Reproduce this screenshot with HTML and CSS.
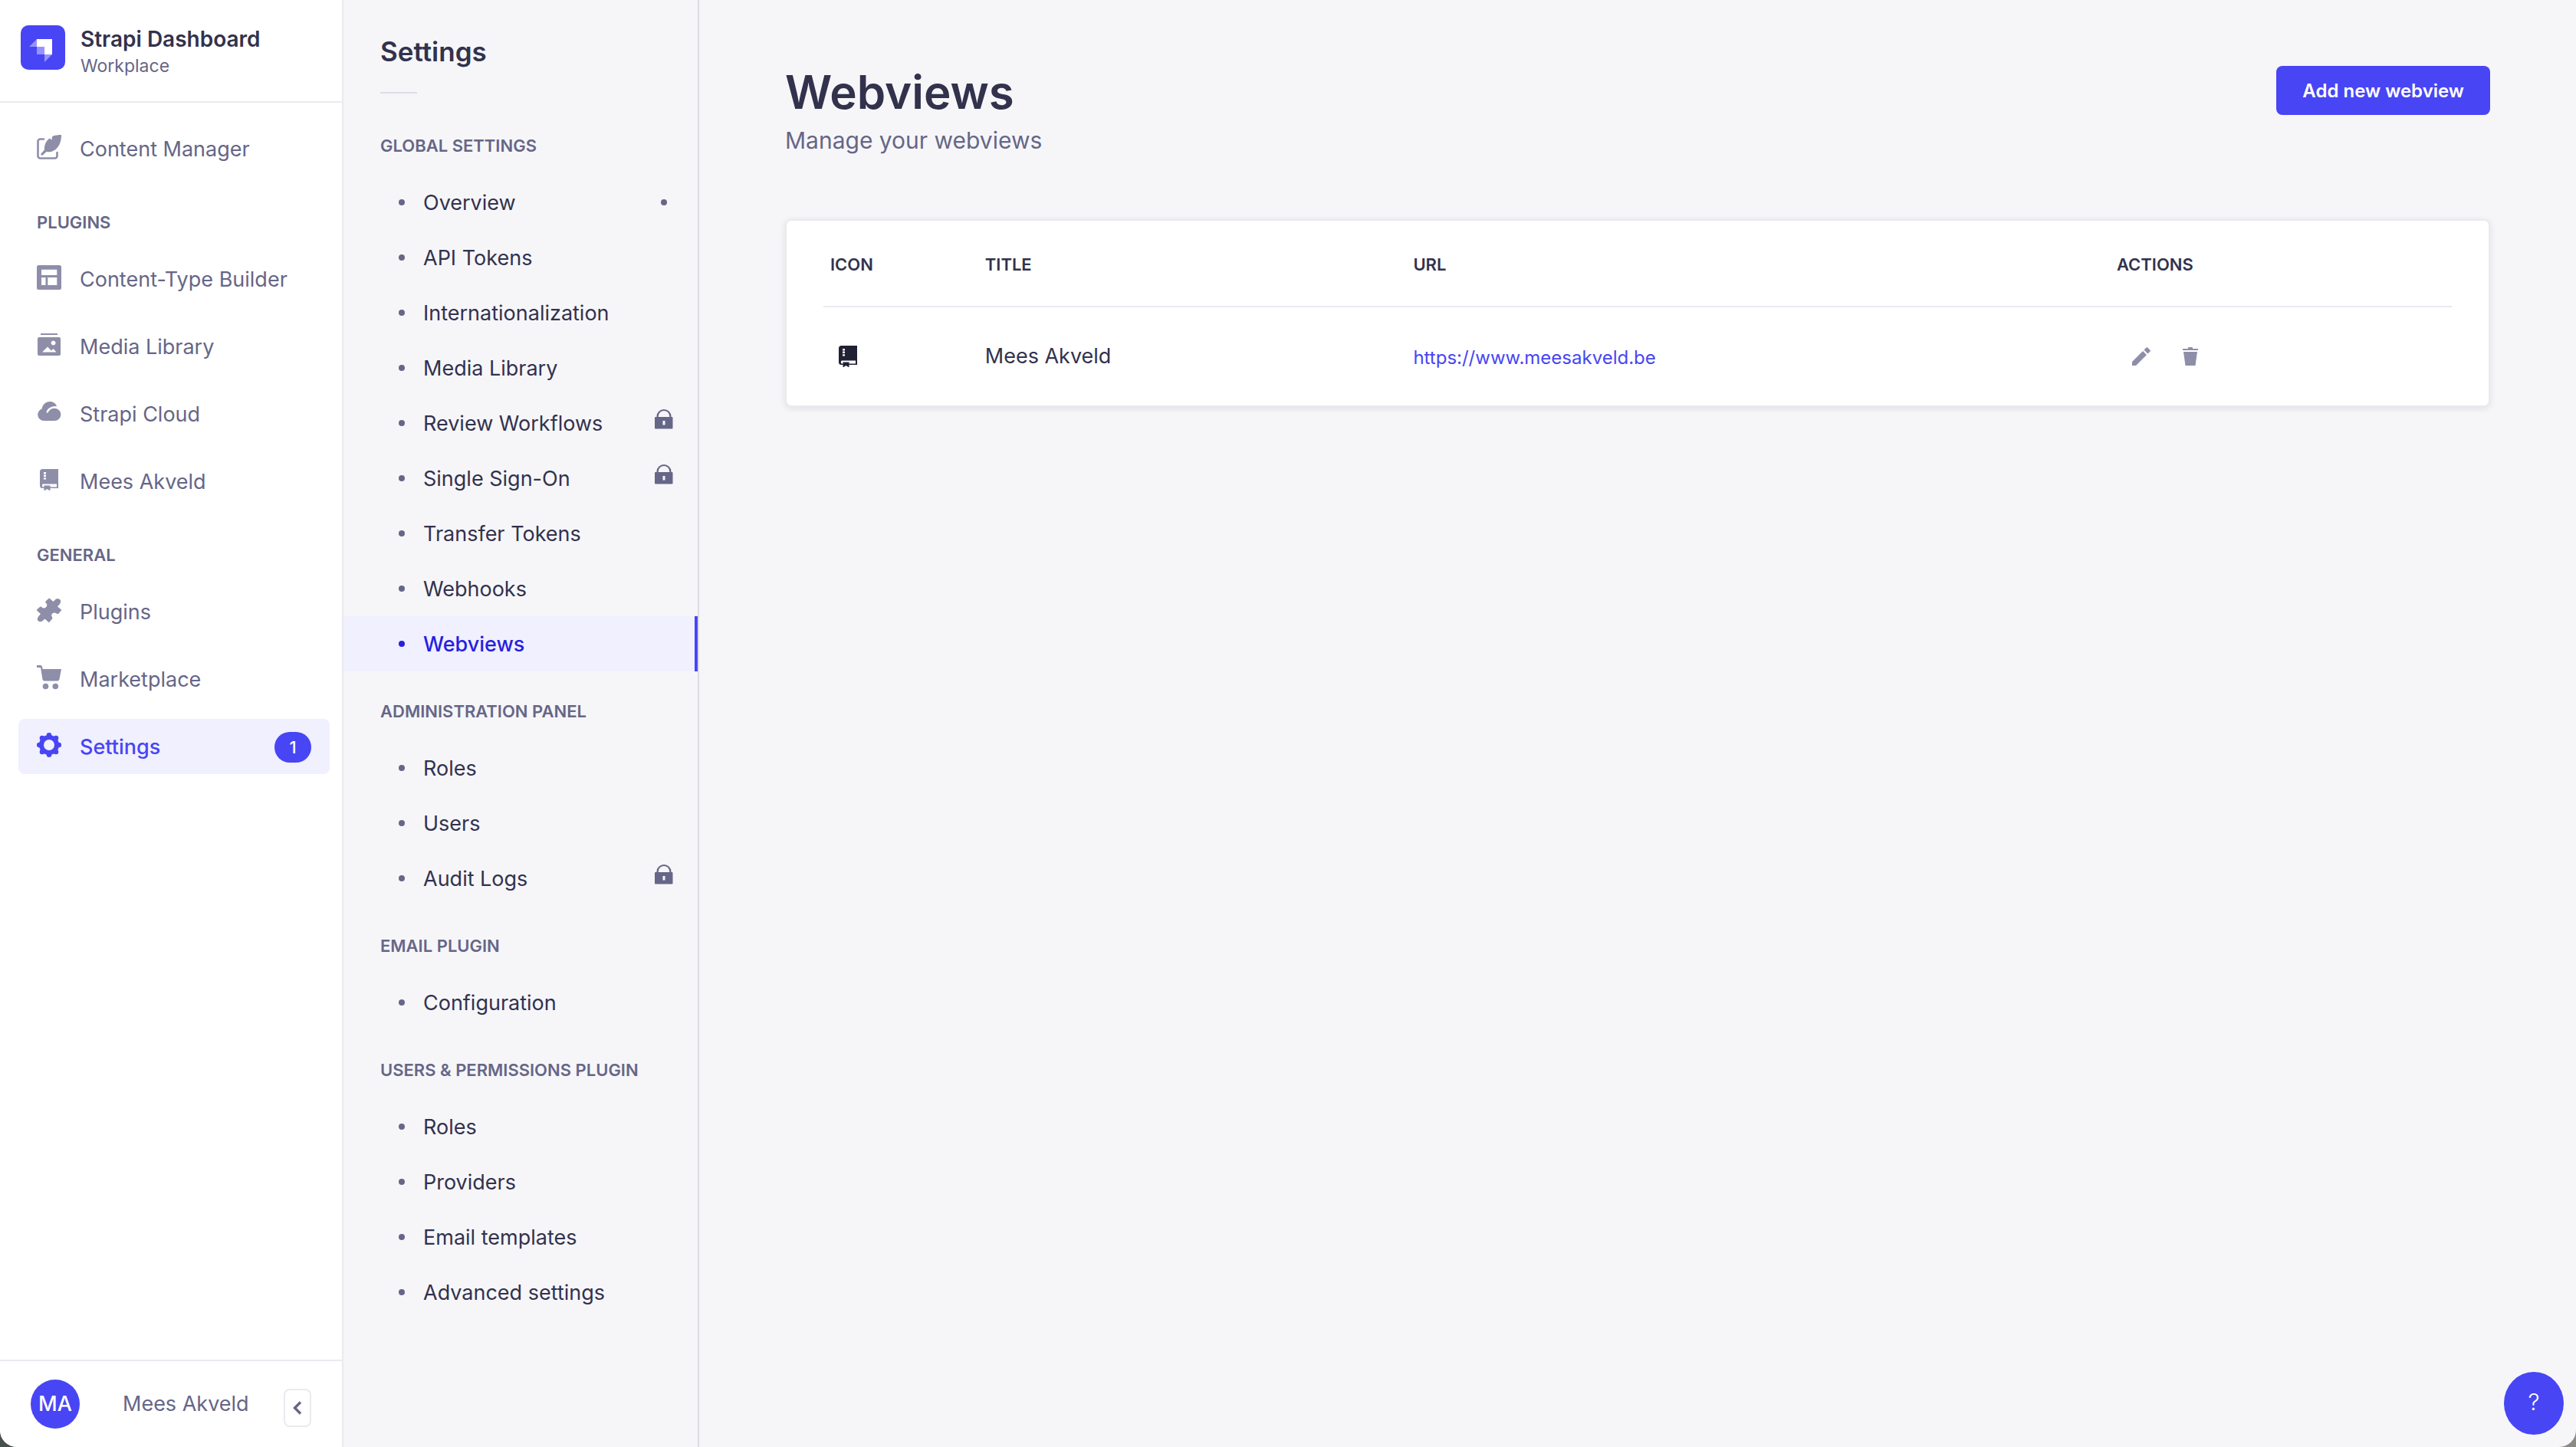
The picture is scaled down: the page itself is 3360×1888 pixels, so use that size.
FILE: index.html
```html
<!DOCTYPE html>
<html lang="en">
<head>
<meta charset="utf-8">
<title>Webviews</title>
<link rel="stylesheet" href="styles.css">
</head>
<body>
<svg class="sprite" aria-hidden="true">
  <symbol id="i-feather" viewBox="0 0 32 32"><path d="M9 5.500H4.500A3 3 0 0 0 1.500 8.500V27.500A3 3 0 0 0 4.500 30.500H23.500A3 3 0 0 0 26.500 27.500V23" fill="none" stroke="currentColor" stroke-width="2.600" stroke-linecap="round"/><path d="M32 0C25 0 21 1 20 2.500L19.500 6.500 16.500 4.500C12 8 9.500 13 10 19.500L5.500 24.500C4.500 26 6.500 27.500 8 26.200L12.500 22C20 24 32 18 32 0Z"/></symbol>
  <symbol id="i-layout" viewBox="0 0 32 32"><path fill-rule="evenodd" d="M2.500 0H29.500A2.500 2.500 0 0 1 32 2.500V29.500A2.500 2.500 0 0 1 29.500 32H2.500A2.500 2.500 0 0 1 0 29.500V2.500A2.500 2.500 0 0 1 2.500 0ZM6 5.700V13H26.300V5.700ZM6 16V26H11.500V16ZM14.300 16V26H26.300V16Z"/></symbol>
  <symbol id="i-media" viewBox="0 0 32 32"><path d="M5 1H27V3H5Z"/><path fill-rule="evenodd" d="M3 6H29A2 2 0 0 1 31 8V28A2 2 0 0 1 29 30H3A2 2 0 0 1 1 28V8A2 2 0 0 1 3 6ZM7 25.500H25.500L21.500 21 19 23.500 14 18.500ZM21.500 10.500A3 3 0 1 0 21.600 10.500Z"/></symbol>
  <symbol id="i-cloud" viewBox="0 2 32 32"><path d="M9 29A8 8 0 0 1 6.500 13.500C7.500 8 11.500 4 17 4 21.500 4 25 6.500 26 10.200 19.500 9.500 14.500 12.500 12.500 17.500 13 19.500 14.500 19 15 17.500 17 14 20 12.500 23.500 12.800A8 8 0 0 1 23 29Z"/></symbol>
  <symbol id="i-book" viewBox="0 0 24 28"><path fill-rule="evenodd" d="M3.500 0H24V25H13.500V28.500L9.500 26 5.500 28.500V25H3.500A3.500 3.500 0 0 1 0 21.500V3.500A3.500 3.500 0 0 1 3.500 0ZM5 4V6.400H8V4ZM5 7.600V10H8V7.600ZM5 11.200V13.600H8V11.200ZM4 19.500C2.500 20 2.500 23 4 23.500H5.500V21.500H13.500V23.500H22V19.500Z"/></symbol>
  <symbol id="i-puzzle" viewBox="0 0 32 32"><path d="M12 4 15.500 1Q16 0 17 1L21.500 5 25 1.500Q28 0 30.500 2.500 32 5 30 8L27 11.500 31.500 15Q32.500 16 31.500 17L28 21C26 21.500 25 19 22.500 19.500 19.500 20 18 23 20 25L20.500 27 16.500 31.500Q16 32.500 15 31.500L10.500 27.500 7 30.500Q3.500 32 1.500 30 0 27.500 2 24.500L5 21 .5 17Q-.5 16 .5 15L4.500 11.500C6.500 11 7 14 10 13.500 13 12.500 14.500 9 12 7Q10.500 5.500 12 4Z"/></symbol>
  <symbol id="i-cart" viewBox="0 0 32 32"><path d="M0 0H5Q6.500 0 7 2L7.700 5H32L29.500 18Q29 20.500 26.500 20.500H10Q8 20.500 7.500 18.500L5 3H0Z"/><circle cx="11.500" cy="27.500" r="3.800"/><circle cx="24.300" cy="27.500" r="3.800"/></symbol>
  <symbol id="i-cog" viewBox="0 0 32 32"><circle cx="16" cy="16" r="10" fill="none" stroke="currentColor" stroke-width="6"/><circle cx="16" cy="3.300" r="3.300"/><circle cx="16" cy="28.700" r="3.300"/><circle cx="3.300" cy="16" r="3.300"/><circle cx="28.700" cy="16" r="3.300"/><circle cx="7" cy="7" r="3.300"/><circle cx="25" cy="7" r="3.300"/><circle cx="7" cy="25" r="3.300"/><circle cx="25" cy="25" r="3.300"/></symbol>
  <symbol id="i-lock" viewBox="0 0 24 26"><path fill-rule="evenodd" d="M2.500 10V9A9.500 9 0 0 1 21.500 9V10H22.500Q23.500 10 23.500 11V24.500Q23.500 25.500 22.500 25.500H1Q0 25.500 0 24.500V11Q0 10 1 10ZM4.800 10H19.200V9A7.200 7 0 0 0 4.800 9ZM10.500 15V20.500H13.500V15Z"/></symbol>
  <symbol id="i-pencil" viewBox="0 0 24 24"><path d="M0 19 14 5 19 10 5 24H0ZM15.500 3.500 18.500.500Q19.300-.2 20.200.500L23.500 3.800Q24.300 4.700 23.500 5.500L20.500 8.500Z"/></symbol>
  <symbol id="i-trash" viewBox="0 0 20 24"><path d="M0 2H7V1Q7 0 8 0H12Q13 0 13 1V2H20V4H0ZM1 6H19L16.500 24H3.500Z"/></symbol>
</svg>

<div class="app">
  <nav class="nav" aria-label="Main">
    <div class="brand">
      <svg class="brand-logo" viewBox="0 0 58 58" aria-hidden="true"><rect width="58" height="58" rx="10" fill="#4845f4"/><path d="M21 18H41V38H31V28H21Z" fill="#fff"/><path d="M21 18V28H11ZM31 38H41L31 48ZM21 28H31V38H21Z" fill="#9593ff"/></svg>
      <div class="brand-text">
        <div class="brand-name">Strapi Dashboard</div>
        <div class="brand-place">Workplace</div>
      </div>
    </div>
    <div class="nav-body">
      <a class="nav-item" href="#"><svg class="icon"><use href="#i-feather"/></svg><span>Content Manager</span></a>
      <h2 class="nav-label">PLUGINS</h2>
      <a class="nav-item" href="#"><svg class="icon"><use href="#i-layout"/></svg><span>Content-Type Builder</span></a>
      <a class="nav-item" href="#"><svg class="icon"><use href="#i-media"/></svg><span>Media Library</span></a>
      <a class="nav-item" href="#"><svg class="icon"><use href="#i-cloud"/></svg><span>Strapi Cloud</span></a>
      <a class="nav-item" href="#"><svg class="icon icon-book"><use href="#i-book"/></svg><span>Mees Akveld</span></a>
      <h2 class="nav-label">GENERAL</h2>
      <a class="nav-item" href="#"><svg class="icon"><use href="#i-puzzle"/></svg><span>Plugins</span></a>
      <a class="nav-item" href="#"><svg class="icon"><use href="#i-cart"/></svg><span>Marketplace</span></a>
      <a class="nav-item active" href="#"><svg class="icon"><use href="#i-cog"/></svg><span>Settings</span><span class="badge">1</span></a>
    </div>
    <div class="user">
      <span class="avatar">MA</span>
      <span class="user-name">Mees Akveld</span>
      <button class="collapse" type="button" aria-label="Collapse the navbar"><svg class="chevron" viewBox="0 0 12 18"><path d="M10 1.500 2.500 9 10 16.500" fill="none" stroke="currentColor" stroke-width="3.400"/></svg></button>
    </div>
  </nav>

  <nav class="subnav" aria-label="Settings">
    <h2 class="subnav-title">Settings</h2>
    <h3 class="subnav-label">GLOBAL SETTINGS</h3>
    <ul class="links">
      <li><a class="link" href="#"><span>Overview</span><i class="dot"></i></a></li>
      <li><a class="link" href="#"><span>API Tokens</span></a></li>
      <li><a class="link" href="#"><span>Internationalization</span></a></li>
      <li><a class="link" href="#"><span>Media Library</span></a></li>
      <li><a class="link" href="#"><span>Review Workflows</span><svg class="lock"><use href="#i-lock"/></svg></a></li>
      <li><a class="link" href="#"><span>Single Sign-On</span><svg class="lock"><use href="#i-lock"/></svg></a></li>
      <li><a class="link" href="#"><span>Transfer Tokens</span></a></li>
      <li><a class="link" href="#"><span>Webhooks</span></a></li>
      <li><a class="link current" href="#" aria-current="page"><span>Webviews</span></a></li>
    </ul>
    <h3 class="subnav-label">ADMINISTRATION PANEL</h3>
    <ul class="links">
      <li><a class="link" href="#"><span>Roles</span></a></li>
      <li><a class="link" href="#"><span>Users</span></a></li>
      <li><a class="link" href="#"><span>Audit Logs</span><svg class="lock"><use href="#i-lock"/></svg></a></li>
    </ul>
    <h3 class="subnav-label">EMAIL PLUGIN</h3>
    <ul class="links">
      <li><a class="link" href="#"><span>Configuration</span></a></li>
    </ul>
    <h3 class="subnav-label">USERS &amp; PERMISSIONS PLUGIN</h3>
    <ul class="links">
      <li><a class="link" href="#"><span>Roles</span></a></li>
      <li><a class="link" href="#"><span>Providers</span></a></li>
      <li><a class="link" href="#"><span>Email templates</span></a></li>
      <li><a class="link" href="#"><span>Advanced settings</span></a></li>
    </ul>
  </nav>

  <main class="main">
    <header class="page-head">
      <div>
        <h1 class="title">Webviews</h1>
        <p class="subtitle">Manage your webviews</p>
      </div>
      <button class="add" type="button">Add new webview</button>
    </header>
    <section class="card">
      <table class="table">
        <colgroup><col class="c-icon"><col class="c-title"><col class="c-url"><col></colgroup>
        <thead><tr><th>ICON</th><th>TITLE</th><th>URL</th><th>ACTIONS</th></tr></thead>
        <tbody><tr>
          <td><svg class="row-icon"><use href="#i-book"/></svg></td>
          <td>Mees Akveld</td>
          <td><a class="url" href="https://www.meesakveld.be">https://www.meesakveld.be</a></td>
          <td><div class="actions">
            <button class="action" type="button" aria-label="Edit"><svg class="pencil"><use href="#i-pencil"/></svg></button>
            <button class="action" type="button" aria-label="Delete"><svg class="trash"><use href="#i-trash"/></svg></button>
          </div></td>
        </tr></tbody>
      </table>
    </section>
  </main>
</div>
<button class="help" type="button" aria-label="Help">?</button>
</body>
</html>
```
FILE: styles.css
```css
* { box-sizing: border-box; margin: 0; padding: 0; }
html { background: linear-gradient(90deg, #46504c 50%, #8b8a84 50%); }
body { min-height: 100vh; font-family: Inter, "Liberation Sans", sans-serif; font-size: 27px; line-height: 40px; color: #32324d; }
a { color: inherit; text-decoration: none; }
ul { list-style: none; }
button { font: inherit; border: 0; background: none; }
svg { display: block; fill: currentColor; flex: none; }
.sprite { position: absolute; width: 0; height: 0; }

.app { display: flex; min-height: 100vh; background: #f6f6f9; border-radius: 0 0 22px 22px; overflow: hidden; }

.nav { flex: none; width: 448px; display: flex; flex-direction: column; background: #fff; border-right: 2px solid #eaeaef; }
.brand { display: flex; align-items: flex-start; gap: 20px; height: 134px; padding: 33px 27px 0; border-bottom: 2px solid #eaeaef; }
.brand-logo { width: 58px; height: 58px; }
.brand-name { font-size: 28px; font-weight: 600; line-height: 36px; }
.brand-place { font-size: 23px; line-height: 34px; color: #666687; }
.nav-body { flex: 1; padding: 24px 16px 24px 24px; }
.nav-item { display: flex; align-items: center; gap: 24px; height: 72px; padding: 2px 24px 0; border-radius: 8px; color: #666687; }
.nav-item + .nav-item { margin-top: 16px; }
.nav-label { height: 98px; padding: 40px 24px 18px; font-size: 22px; font-weight: 600; line-height: 40px; color: #666687; }
.icon { width: 32px; height: 32px; margin-bottom: 6px; color: #8e8ea9; }
.icon-book { height: 28px; }
.active { background: #f0f0ff; color: #4845f4; font-weight: 500; }
.active .icon { color: #4845f4; }
.badge { width: 48px; height: 40px; margin-left: auto; border-radius: 20px; background: #4845f4; color: #fff; font-size: 22px; text-align: center; }
.user { display: flex; align-items: center; height: 114px; padding: 0 40px; border-top: 2px solid #eaeaef; color: #666687; }
.avatar { width: 64px; height: 64px; margin-right: 56px; border-radius: 50%; background: #4845f4; color: #fff; font-weight: 500; line-height: 64px; text-align: center; }
.collapse { display: grid; place-items: center; width: 36px; height: 50px; margin: 10px 0 0 auto; border: 2px solid #eaeaef; border-radius: 8px; background: #fff; color: #666687; }
.chevron { width: 12px; height: 18px; }

.subnav { flex: none; width: 464px; padding: 44px 0; border-right: 2px solid #dcdce4; }
.subnav-title { padding: 0 48px; font-size: 35px; font-weight: 600; line-height: 46px; }
.subnav-title::after { content: ""; display: block; width: 48px; height: 2px; margin: 30px 0 16px; background: #dcdce4; }
.subnav-label { height: 90px; padding: 32px 48px 18px; font-size: 22px; font-weight: 600; line-height: 40px; color: #666687; }
.link { display: flex; align-items: center; height: 72px; padding: 0 32px 0 72px; }
.link span { padding-top: 2px; }
.link::before { content: ""; width: 8px; height: 8px; margin-right: 24px; border-radius: 50%; background: #666687; }
.dot { width: 8px; height: 8px; margin: 0 8px 0 auto; border-radius: 50%; background: #666687; }
.lock { width: 24px; height: 26px; margin: 0 0 10px auto; color: #666687; }
.current { border-right: 4px solid #4845f4; background: #f0f0ff; color: #271fe0; font-weight: 500; }
.current::before { background: #271fe0; }

.main { flex: 1; padding: 80px 112px; }
.page-head { display: flex; align-items: flex-start; justify-content: space-between; padding-bottom: 80px; }
.title { font-size: 60px; font-weight: 600; line-height: 80px; }
.subtitle { font-size: 30px; line-height: 46px; color: #666687; }
.add { height: 64px; margin-top: 6px; padding: 2px 34px 0; border-radius: 8px; background: #4845f4; color: #fff; font-size: 24px; font-weight: 600; }
.card { padding: 0 48px; border: 2px solid #eaeaef; border-radius: 8px; background: #fff; box-shadow: 0 2px 8px rgba(33, 33, 52, .1); }
.table { width: 100%; table-layout: fixed; border-collapse: collapse; }
.c-icon { width: 9.5%; }
.c-title { width: 26.3%; }
.c-url { width: 43.2%; }
th { height: 112px; padding: 2px 9px 0; border-bottom: 2px solid #eaeaef; font-size: 22px; font-weight: 600; text-align: left; }
td { height: 129px; padding: 0 9px; }
.row-icon { width: 24px; height: 28px; margin-left: 11px; color: #212134; }
.url { display: block; padding-top: 4px; font-size: 24px; color: #4845f4; }
.actions { display: flex; gap: 16px; padding-left: 8px; }
.action { display: grid; place-items: center; width: 48px; height: 48px; color: #8e8ea9; }
.pencil { width: 24px; height: 24px; }
.trash { width: 20px; height: 24px; }

.help { position: fixed; right: 16px; bottom: 16px; width: 78px; height: 82px; padding-bottom: 4px; border-radius: 50%; background: #4845f4; color: #fff; font-size: 30px; font-weight: 300; }
```
